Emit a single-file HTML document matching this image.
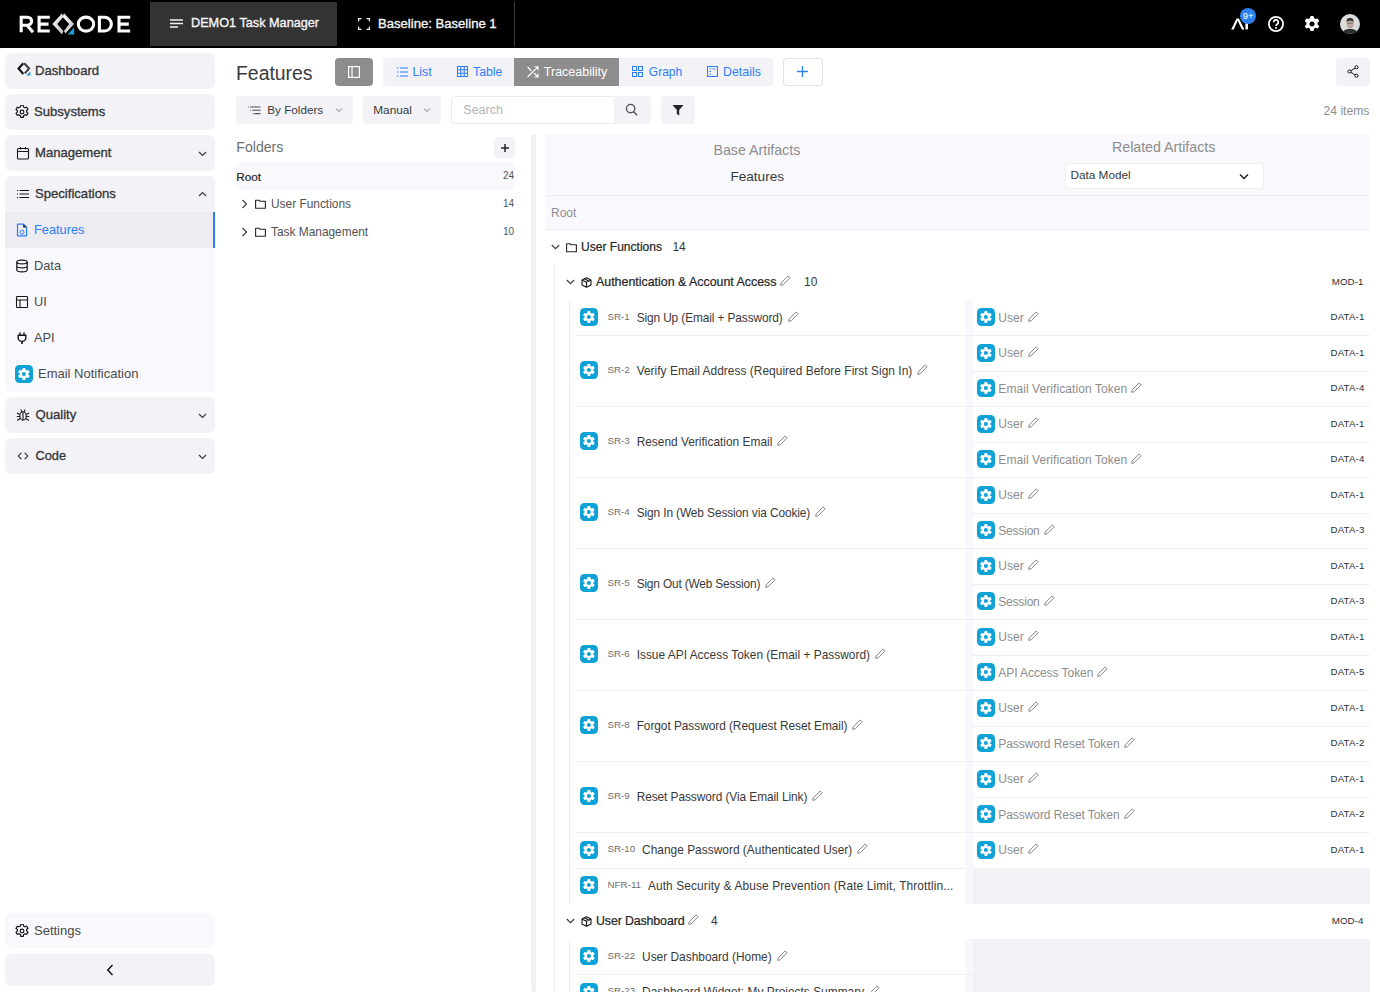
<!DOCTYPE html><html><head><meta charset="utf-8"><style>
*{box-sizing:border-box;margin:0;padding:0}
html,body{width:1380px;height:992px;overflow:hidden;background:#fff;font-family:"Liberation Sans",sans-serif;color:#393939}
.abs{position:absolute}
.txt{position:absolute;white-space:nowrap;line-height:normal}
.card{position:absolute;left:5px;width:210px;background:#f3f3f7;border-radius:6px}
.btn{position:absolute;border-radius:4px;background:#f3f3f7}
.div{position:absolute;height:1px;background:#efeff3}
.gi{position:absolute;width:18px;height:18px}
.pen{position:absolute;width:11px;height:11px}
.frow{position:absolute;display:flex;align-items:center;white-space:nowrap;line-height:normal}
</style></head><body><svg width="0" height="0" style="position:absolute">
<defs>
<symbol id="gear" viewBox="0 0 18 18">
<rect x="0" y="0" width="18" height="18" rx="4.5" fill="#0fa2d7"/>
<g transform="translate(8.9 9)" fill="#fff"><rect x="-1.5" y="-5.9" width="3" height="3" rx="0.6" transform="rotate(0)"/><rect x="-1.5" y="-5.9" width="3" height="3" rx="0.6" transform="rotate(60)"/><rect x="-1.5" y="-5.9" width="3" height="3" rx="0.6" transform="rotate(120)"/><rect x="-1.5" y="-5.9" width="3" height="3" rx="0.6" transform="rotate(180)"/><rect x="-1.5" y="-5.9" width="3" height="3" rx="0.6" transform="rotate(240)"/><rect x="-1.5" y="-5.9" width="3" height="3" rx="0.6" transform="rotate(300)"/><circle r="4.4"/><circle r="2.05" fill="#0fa2d7"/></g>
</symbol>
<symbol id="pen" viewBox="0 0 11 11">
<path d="M8.2,0.9 L10.1,2.8 L3.0,9.9 L0.7,10.3 L1.1,8.0 Z" fill="none" stroke="#7a7a7a" stroke-width="0.9" stroke-linejoin="round"/>
</symbol>
<symbol id="folder" viewBox="0 0 11 10">
<path d="M0.6,1.2 h3.4 l1,1.1 h5.4 v6.9 h-9.8 z" fill="none" stroke="#262626" stroke-width="1.1" stroke-linejoin="round"/>
</symbol>
<symbol id="cube" viewBox="0 0 11 11">
<path d="M5.5,0.7 L10,3 V8 L5.5,10.3 L1,8 V3 Z M1,3 L5.5,5.3 L10,3 M5.5,5.3 V10.3 M3.2,1.85 L7.8,4.1" fill="none" stroke="#161616" stroke-width="1.1" stroke-linejoin="round"/>
</symbol>
</defs>
</svg>
<div class="abs" style="left:0;top:0;width:1380px;height:48px;background:#000"></div>
<svg class="abs" style="left:15px;top:10px" width="120" height="28" viewBox="15 10 120 28">
<defs><linearGradient id="lg1" x1="0" y1="0" x2="1" y2="1"><stop offset="0" stop-color="#ffffff"/><stop offset="1" stop-color="#bdbdbd"/></linearGradient></defs>
<g fill="none" stroke="#fff" stroke-width="3.1">
<path d="M21.2,32.3 V17.2 H27.6 A4,4 0 0 1 27.6,25.2 H21.2 M27,25.2 L33,32.3"/>
<path d="M49.8,17.2 H39.1 V31 H49.8 M39.1,24.1 H48.5"/>
<ellipse cx="86" cy="24.1" rx="7.7" ry="7.0"/>
<path d="M99.4,17.2 V31 H104.5 A6.9,6.9 0 0 0 104.5,17.2 Z"/>
<path d="M130.2,17.2 H119 V31 H130.2 M119,24.1 H128.8"/>
</g>
<path d="M62.0,13.2 L63.4,17.0 L57.2,24.0 L63.4,31.0 L62.0,34.6 L52.4,24.0 Z" fill="url(#lg1)"/>
<path d="M64.0,13.2 L74.1,24.0 L65.4,33.6 L64.0,31.0 L69.2,24.0 L62.6,17.0 Z" fill="url(#lg1)"/>
<path d="M67.6,34.5 L74.1,27.6 V34.5 Z" fill="#1aa0e0"/>
</svg>
<div class="abs" style="left:150px;top:2px;width:187px;height:44px;background:#333"></div>
<svg class="abs" style="left:170px;top:19px" width="14" height="10" viewBox="0 0 14 10"><path d="M0,1 H13 M0,4.5 H13 M0,8 H8" stroke="#f4f4f4" stroke-width="1.3"/></svg>
<div class="txt" style="top:16.00px;font-size:12.7px;color:#f4f4f4;left:191px;-webkit-text-stroke:0.35px #f4f4f4;">DEMO1 Task Manager</div>
<svg class="abs" style="left:358px;top:18px" width="12" height="12" viewBox="0 0 12 12"><path d="M0.6,3.5 V0.6 H3.5 M8.5,0.6 H11.4 V3.5 M11.4,8.5 V11.4 H8.5 M3.5,11.4 H0.6 V8.5" fill="none" stroke="#f4f4f4" stroke-width="1.2"/></svg>
<div class="txt" style="top:15.77px;font-size:13.1px;color:#f4f4f4;left:378px;-webkit-text-stroke:0.35px #f4f4f4;">Baseline: Baseline 1</div>
<div class="abs" style="left:514px;top:2px;width:1px;height:44px;background:#3d3d3d"></div>
<svg class="abs" style="left:1230px;top:16px" width="22" height="16" viewBox="1230 16 22 16"><path d="M1231.2,29.4 L1236.5,18.5 H1238.9 L1244.4,29.4 H1241.9 L1237.7,20.8 L1233.7,29.4 Z" fill="#fff"/><rect x="1245.4" y="20" width="2.6" height="9.4" fill="#fff"/></svg>
<div class="abs" style="left:1240px;top:7.8px;width:16px;height:16px;border-radius:50%;background:#2f80ed"></div>
<div class="txt" style="top:10.14px;font-size:9.5px;color:#fff;left:1242.8px;">9+</div>
<svg class="abs" style="left:1267px;top:15px" width="18" height="18" viewBox="0 0 18 18"><circle cx="9" cy="9" r="7.1" fill="none" stroke="#fff" stroke-width="1.8"/><path d="M6.7,7.2 a2.3,2.3 0 1 1 3.3,2.05 c-0.6,0.3 -0.95,0.75 -0.95,1.5 v0.35" fill="none" stroke="#fff" stroke-width="1.7"/><circle cx="9" cy="13.1" r="1" fill="#fff"/></svg>
<svg class="abs" style="left:1302.7px;top:15px" width="18" height="18" viewBox="0 0 18 18"><g transform="translate(9 9)"><path fill="#fff" fill-rule="evenodd" d="M-1.5,-8 h3 l0.45,2.1 a6,6 0 0 1 1.7,1 l2.05,-0.7 1.5,2.6 -1.6,1.45 a6,6 0 0 1 0,2 l1.6,1.45 -1.5,2.6 -2.050,-0.7 a6,6 0 0 1 -1.7,1 l-0.45,2.1 h-3 l-0.45,-2.1 a6,6 0 0 1 -1.7,-1 l-2.05,0.7 -1.5,-2.6 1.6,-1.45 a6,6 0 0 1 0,-2 l-1.6,-1.45 1.5,-2.6 2.05,0.7 a6,6 0 0 1 1.7,-1 z M0,-2.6 a2.6,2.6 0 1 0 0.001,0 z"/></g></svg>
<svg class="abs" style="left:1340px;top:14px" width="20" height="20" viewBox="0 0 20 20"><defs><clipPath id="av"><circle cx="10" cy="10" r="10"/></clipPath></defs><g clip-path="url(#av)"><rect width="20" height="20" fill="#dcdcdc"/><ellipse cx="10.1" cy="10" rx="3.4" ry="4.4" fill="#b9a79c"/><path d="M6.6,8.2 q-0.2,-4.2 3.5,-4.2 q3.7,0 3.5,4.2 q-0.6,-1.8 -3.5,-1.8 q-2.9,0 -3.5,1.8z" fill="#2e2a28"/><path d="M6.9,9.3 h6.4" stroke="#555" stroke-width="0.6"/><path d="M1.5,20 q1.5,-4.6 8.6,-5.2 q7,0.6 8.4,5.2z" fill="#2b2d2e"/></g></svg>
<div class="card" style="top:53px;height:36px"></div>
<svg class="abs" style="left:16.5px;top:62px" width="14" height="14" viewBox="0 0 14 14"><path d="M6.3,1.2 L1.6,6.6 L6.3,12" fill="none" stroke="#161616" stroke-width="2.2"/><path d="M7.3,1.2 L12,6.6 L7.8,11.4" fill="none" stroke="#444" stroke-width="2.2"/><path d="M9.2,13.6 L13.4,9.6 V13.6Z" fill="#1e9ad6"/></svg>
<div class="txt" style="top:62.97px;font-size:13.1px;color:#393939;left:35px;-webkit-text-stroke:0.35px #393939;">Dashboard</div>
<div class="card" style="top:94px;height:36px"></div>
<svg class="abs" style="left:15px;top:105px" width="14" height="14" viewBox="0.6 0.6 12.8 12.8"><g transform="translate(7 7)"><path fill="none" stroke="#161616" stroke-width="1.1" d="M-1.1,-6.2 h2.2 l0.4,1.6 a4.7,4.7 0 0 1 1.3,0.75 l1.55,-0.55 1.1,1.9 -1.2,1.1 a4.7,4.7 0 0 1 0,1.5 l1.2,1.1 -1.1,1.9 -1.55,-0.55 a4.7,4.7 0 0 1 -1.3,0.75 l-0.4,1.6 h-2.2 l-0.4,-1.6 a4.7,4.7 0 0 1 -1.3,-0.75 l-1.55,0.55 -1.1,-1.9 1.2,-1.1 a4.7,4.7 0 0 1 0,-1.5 l-1.2,-1.1 1.1,-1.9 1.55,0.55 a4.7,4.7 0 0 1 1.3,-0.75 z"/><circle r="1.7" fill="none" stroke="#161616" stroke-width="1.1"/></g></svg>
<div class="txt" style="top:103.97px;font-size:13.1px;color:#393939;left:34px;-webkit-text-stroke:0.35px #393939;">Subsystems</div>
<div class="card" style="top:135px;height:36px"></div>
<svg class="abs" style="left:16px;top:146px" width="14" height="14" viewBox="0 0 14 14"><rect x="1.5" y="2.5" width="11" height="10.5" rx="1" fill="none" stroke="#161616" stroke-width="1.1"/><path d="M1.5,5.5 H12.5 M4.5,1 V3.5 M9.5,1 V3.5" stroke="#161616" stroke-width="1.1"/></svg>
<div class="txt" style="top:144.97px;font-size:13.1px;color:#393939;left:35px;-webkit-text-stroke:0.35px #393939;">Management</div>
<svg class="abs" style="left:198px;top:148.5px" width="9" height="9" viewBox="0 0 9 9"><path d="M1,3 L4.5,6.5 L8,3" fill="none" stroke="#393939" stroke-width="1.2"/></svg>
<div class="card" style="top:176px;height:216px;background:#f9f9fd;overflow:hidden"><div class="abs" style="left:0;top:0;width:210px;height:36px;background:#f3f3f7"></div><div class="abs" style="left:0;top:36px;width:210px;height:36px;background:#ececf2"></div><div class="abs" style="left:208px;top:36px;width:2px;height:36px;background:#2d7ff9"></div></div>
<svg class="abs" style="left:16px;top:187px" width="14" height="14" viewBox="0 0 14 14"><path d="M1,3.5 H2 M1,7 H2 M1,10.5 H2 M3.6,3.5 H13 M3.6,7 H13 M3.6,10.5 H13" stroke="#161616" stroke-width="1.15"/></svg>
<div class="txt" style="top:185.97px;font-size:13.1px;color:#393939;left:35px;-webkit-text-stroke:0.35px #393939;">Specifications</div>
<svg class="abs" style="left:198px;top:189.5px" width="9" height="9" viewBox="0 0 9 9"><path d="M1,6 L4.5,2.5 L8,6" fill="none" stroke="#393939" stroke-width="1.2"/></svg>
<svg class="abs" style="left:15px;top:223px" width="14" height="14" viewBox="0 0 14 14"><path d="M2.5,1.2 H8.6 L11.6,4.2 V12.8 H2.5 Z" fill="none" stroke="#2d7ff9" stroke-width="1.2" stroke-linejoin="round"/><path d="M8.2,1.2 V4.6 H11.6 Z" fill="#1a1a1a"/><circle cx="7" cy="9.2" r="2" fill="none" stroke="#2d7ff9" stroke-width="1"/></svg>
<div class="txt" style="top:222.14px;font-size:12.8px;color:#2d7ff9;left:34px;">Features</div>
<svg class="abs" style="left:15px;top:259px" width="14" height="14" viewBox="0 0 14 14"><ellipse cx="7" cy="3" rx="5.2" ry="1.9" fill="none" stroke="#161616" stroke-width="1.2"/><path d="M1.8,3 V11 A5.2,1.9 0 0 0 12.2,11 V3 M1.8,7 A5.2,1.9 0 0 0 12.2,7" fill="none" stroke="#161616" stroke-width="1.2"/></svg>
<div class="txt" style="top:258.14px;font-size:12.8px;color:#4a4a4a;left:34px;">Data</div>
<svg class="abs" style="left:15px;top:295px" width="14" height="14" viewBox="0 0 14 14"><rect x="1.5" y="1.5" width="11" height="11" rx="0.8" fill="none" stroke="#161616" stroke-width="1.1"/><path d="M1.5,5 H12.5 M5,5 V12.5" stroke="#161616" stroke-width="1.1"/></svg>
<div class="txt" style="top:294.14px;font-size:12.8px;color:#4a4a4a;left:34px;">UI</div>
<svg class="abs" style="left:15px;top:331px" width="14" height="14" viewBox="0 0 14 14"><path d="M5,1.2 V4 M9,1.2 V4" stroke="#161616" stroke-width="1.3"/><path d="M3.2,4.2 H10.8 V6.8 A3.8,3.6 0 0 1 3.2,6.8 Z" fill="none" stroke="#161616" stroke-width="1.4"/><path d="M7,10.4 V13" stroke="#161616" stroke-width="1.6"/></svg>
<div class="txt" style="top:330.14px;font-size:12.8px;color:#4a4a4a;left:34px;">API</div>
<svg class="gi" style="left:15px;top:365px" viewBox="0 0 18 18"><use href="#gear"/></svg>
<div class="txt" style="top:366.02px;font-size:13px;color:#4a4a4a;left:38px;">Email Notification</div>
<div class="card" style="top:397px;height:36px"></div>
<svg class="abs" style="left:16px;top:408px" width="14" height="14" viewBox="0 0 14 14"><ellipse cx="7" cy="8" rx="3.2" ry="4.2" fill="none" stroke="#161616" stroke-width="1.1"/><path d="M7,4 V12 M1,5 L3.8,6.5 M13,5 L10.2,6.5 M0.8,8.5 H3.8 M13.2,8.5 H10.2 M1.2,12.5 L4,10.5 M12.8,12.5 L10,10.5 M4.8,1.5 L5.8,3.9 M9.2,1.5 L8.2,3.9" stroke="#161616" stroke-width="1.1" fill="none"/></svg>
<div class="txt" style="top:406.97px;font-size:13.1px;color:#393939;left:35.5px;-webkit-text-stroke:0.35px #393939;">Quality</div>
<svg class="abs" style="left:198px;top:410.5px" width="9" height="9" viewBox="0 0 9 9"><path d="M1,3 L4.5,6.5 L8,3" fill="none" stroke="#393939" stroke-width="1.2"/></svg>
<div class="card" style="top:438px;height:36px"></div>
<svg class="abs" style="left:15px;top:449px" width="14" height="14" viewBox="0 0 14 14"><path d="M6.3,3.8 L3.3,7 L6.3,10.2 M9.7,3.8 L12.7,7 L9.7,10.2" fill="none" stroke="#161616" stroke-width="1.05"/></svg>
<div class="txt" style="top:448.14px;font-size:12.8px;color:#393939;left:35.5px;-webkit-text-stroke:0.35px #393939;">Code</div>
<svg class="abs" style="left:198px;top:451.5px" width="9" height="9" viewBox="0 0 9 9"><path d="M1,3 L4.5,6.5 L8,3" fill="none" stroke="#393939" stroke-width="1.2"/></svg>
<div class="card" style="top:913px;height:35px;background:#f9f9fd"></div>
<svg class="abs" style="left:15px;top:924px" width="14" height="14" viewBox="0.6 0.6 12.8 12.8"><g transform="translate(7 7)"><path fill="none" stroke="#161616" stroke-width="1.1" d="M-1.1,-6.2 h2.2 l0.4,1.6 a4.7,4.7 0 0 1 1.3,0.75 l1.55,-0.55 1.1,1.9 -1.2,1.1 a4.7,4.7 0 0 1 0,1.5 l1.2,1.1 -1.1,1.9 -1.55,-0.55 a4.7,4.7 0 0 1 -1.3,0.75 l-0.4,1.6 h-2.2 l-0.4,-1.6 a4.7,4.7 0 0 1 -1.3,-0.75 l-1.55,0.55 -1.1,-1.9 1.2,-1.1 a4.7,4.7 0 0 1 0,-1.5 l-1.2,-1.1 1.1,-1.9 1.55,0.55 a4.7,4.7 0 0 1 1.3,-0.75 z"/><circle r="1.7" fill="none" stroke="#161616" stroke-width="1.1"/></g></svg>
<div class="txt" style="top:923.02px;font-size:13px;color:#4a4a4a;left:34px;">Settings</div>
<div class="card" style="top:954px;height:32px"></div>
<svg class="abs" style="left:106px;top:964px" width="8" height="12" viewBox="0 0 8 12"><path d="M6.5,1 L1.8,6 L6.5,11" fill="none" stroke="#161616" stroke-width="1.5"/></svg>
<div class="txt" style="top:61.84px;font-size:19.4px;color:#3a3a3a;left:236px;">Features</div>
<div class="btn" style="left:335px;top:58px;width:38px;height:28px;background:#8d8d8d"></div>
<svg class="abs" style="left:348px;top:66px" width="12" height="12" viewBox="0 0 12 12"><rect x="0.6" y="0.6" width="10.8" height="10.8" fill="none" stroke="#fff" stroke-width="1.2"/><path d="M4,0.6 V11.4" stroke="#fff" stroke-width="1.2"/></svg>
<div class="btn" style="left:383px;top:58px;width:390px;height:28px"></div>
<div class="abs" style="left:514px;top:58px;width:105px;height:28px;background:#8d8d8d"></div>
<svg class="abs" style="left:397px;top:67px" width="11" height="10" viewBox="0 0 11 10"><path d="M0,1 H1.5 M0,5 H1.5 M0,9 H1.5 M3,1 H11 M3,5 H11 M3,9 H11" stroke="#2d7ff9" stroke-width="1.1"/></svg>
<div class="txt" style="top:64.93px;font-size:12.3px;color:#2d7ff9;left:412.5px;">List</div>
<svg class="abs" style="left:457px;top:66px" width="11" height="11" viewBox="0 0 11 11"><path d="M0.5,0.5 H10.5 V10.5 H0.5 Z M0.5,3.8 H10.5 M0.5,7.2 H10.5 M3.8,0.5 V10.5 M7.2,0.5 V10.5" fill="none" stroke="#2d7ff9" stroke-width="1.1"/></svg>
<div class="txt" style="top:64.93px;font-size:12.3px;color:#2d7ff9;left:473px;">Table</div>
<svg class="abs" style="left:527px;top:66px" width="12" height="12" viewBox="0 0 12 12"><path d="M0.5,1 L4.5,5 M0.5,11 L11,0.8 M7.5,0.8 H11 V4.3 M7,7 L11,11 M7.5,11 H11 V7.5" fill="none" stroke="#fff" stroke-width="1.1"/></svg>
<div class="txt" style="top:64.81px;font-size:12.5px;color:#fff;left:543.8px;">Traceability</div>
<svg class="abs" style="left:632px;top:66px" width="11" height="11" viewBox="0 0 11 11"><path d="M0.5,0.5 H4.5 V4.5 H0.5 Z M6.5,0.5 H10.5 V4.5 H6.5 Z M0.5,6.5 H4.5 V10.5 H0.5 Z M6.5,6.5 H10.5 V10.5 H6.5 Z" fill="none" stroke="#2d7ff9" stroke-width="1.1"/></svg>
<div class="txt" style="top:65.10px;font-size:12px;color:#2d7ff9;left:648.8px;">Graph</div>
<svg class="abs" style="left:707px;top:66px" width="11" height="11" viewBox="0 0 11 11"><path d="M0.5,0.5 H10.5 V10.5 H0.5 Z M2.5,3 H4 M2.5,5.5 H4 M2.5,8 H4 M5.5,3 H8.5" fill="none" stroke="#2d7ff9" stroke-width="1.1"/></svg>
<div class="txt" style="top:64.87px;font-size:12.4px;color:#2d7ff9;left:723px;">Details</div>
<div class="btn" style="left:783px;top:58px;width:40px;height:28px;background:#fff;border:1px solid #e0e0e6"></div>
<svg class="abs" style="left:797px;top:66px" width="11" height="11" viewBox="0 0 11 11"><path d="M5.5,0 V11 M0,5.5 H11" stroke="#2d7ff9" stroke-width="1.3"/></svg>
<div class="btn" style="left:1336px;top:58px;width:34px;height:28px"></div>
<svg class="abs" style="left:1347px;top:65px" width="12" height="13" viewBox="0 0 12 13"><circle cx="2.5" cy="6.5" r="1.6" fill="none" stroke="#161616" stroke-width="1"/><circle cx="9.5" cy="2.3" r="1.6" fill="none" stroke="#161616" stroke-width="1"/><circle cx="9.5" cy="10.7" r="1.6" fill="none" stroke="#161616" stroke-width="1"/><path d="M3.9,5.7 L8.1,3.1 M3.9,7.3 L8.1,9.9" stroke="#161616" stroke-width="1"/></svg>
<div class="btn" style="left:236px;top:96px;width:117px;height:28px"></div>
<svg class="abs" style="left:247.5px;top:106px" width="13" height="9" viewBox="0 0 13 9"><path d="M0,1 H0.8 M2.2,1 H12.5 M2.2,4.3 H3 M4.2,4.3 H12.5 M4.6,7.6 H5.4 M6.4,7.6 H12.5" stroke="#505050" stroke-width="1.05"/></svg>
<div class="txt" style="top:103.27px;font-size:11.7px;color:#393939;left:267.3px;">By Folders</div>
<svg class="abs" style="left:335px;top:107px" width="8" height="6" viewBox="0 0 8 6"><path d="M1,1.5 L4,4.5 L7,1.5" fill="none" stroke="#777" stroke-width="1"/></svg>
<div class="btn" style="left:363px;top:96px;width:78px;height:28px"></div>
<div class="txt" style="top:103.22px;font-size:11.8px;color:#393939;left:373.3px;">Manual</div>
<svg class="abs" style="left:423px;top:107px" width="8" height="6" viewBox="0 0 8 6"><path d="M1,1.5 L4,4.5 L7,1.5" fill="none" stroke="#777" stroke-width="1"/></svg>
<div class="btn" style="left:451px;top:96px;width:200px;height:28px;background:#fff;border:1px solid #ececf0"></div>
<div class="abs" style="left:614px;top:96px;width:37px;height:28px;background:#f3f3f7;border-radius:0 4px 4px 0"></div>
<div class="txt" style="top:102.81px;font-size:12.5px;color:#b4b4b8;left:463.3px;">Search</div>
<svg class="abs" style="left:625px;top:103px" width="13" height="13" viewBox="0 0 13 13"><circle cx="5.6" cy="5.6" r="4.2" fill="none" stroke="#505050" stroke-width="1.35"/><path d="M8.7,8.7 L12.2,12.2" stroke="#505050" stroke-width="1.4"/></svg>
<div class="btn" style="left:661px;top:96px;width:34px;height:28px"></div>
<svg class="abs" style="left:672px;top:104px" width="12" height="12" viewBox="0 0 12 12"><path d="M0.5,1 H11.5 L7.2,6 V11.5 L4.8,10 V6 Z" fill="#262626"/></svg>
<div class="txt" style="top:103.51px;font-size:12.15px;color:#8d8d8d;left:1323.5px;">24 items</div>
<div class="txt" style="top:138.89px;font-size:14.1px;color:#6f6f6f;left:236.3px;">Folders</div>
<div class="btn" style="left:494px;top:137px;width:21px;height:21px"></div>
<svg class="abs" style="left:501px;top:144px" width="8" height="8" viewBox="0 0 8 8"><path d="M4,0 V8 M0,4 H8" stroke="#262626" stroke-width="1.5"/></svg>
<div class="abs" style="left:236px;top:162px;width:279px;height:28px;background:#f9f9fd;border-radius:4px"></div>
<div class="txt" style="top:169.77px;font-size:11.7px;color:#262626;left:236.3px;-webkit-text-stroke:0.2px #262626;">Root</div>
<div class="txt" style="top:169.75px;font-size:10px;color:#555;right:866px;">24</div>
<svg class="abs" style="left:241px;top:198.5px" width="7" height="10" viewBox="0 0 7 10"><path d="M1.5,1 L5.5,5 L1.5,9" fill="none" stroke="#393939" stroke-width="1.1"/></svg>
<svg class="abs" style="left:255px;top:198.5px" width="11" height="10" viewBox="0 0 11 10"><use href="#folder"/></svg>
<div class="txt" style="top:196.66px;font-size:11.9px;color:#525252;left:271px;">User Functions</div>
<div class="txt" style="top:197.75px;font-size:10px;color:#555;right:866px;">14</div>
<svg class="abs" style="left:241px;top:226.5px" width="7" height="10" viewBox="0 0 7 10"><path d="M1.5,1 L5.5,5 L1.5,9" fill="none" stroke="#393939" stroke-width="1.1"/></svg>
<svg class="abs" style="left:255px;top:226.5px" width="11" height="10" viewBox="0 0 11 10"><use href="#folder"/></svg>
<div class="txt" style="top:224.66px;font-size:11.9px;color:#525252;left:271px;">Task Management</div>
<div class="txt" style="top:225.75px;font-size:10px;color:#555;right:866px;">10</div>
<div class="abs" style="left:531px;top:134px;width:5px;height:858px;background:#f0f0f5;border-radius:2.5px"></div>
<div class="abs" style="left:546px;top:134px;width:824px;height:61px;background:#f9f9fd"></div>
<div class="abs" style="left:546px;top:195px;width:824px;height:1px;background:#ececf1"></div>
<div class="abs" style="left:546px;top:196px;width:824px;height:33px;background:#f9f9fd"></div>
<div class="abs" style="left:546px;top:229px;width:824px;height:1px;background:#ececf1"></div>
<div class="txt" style="top:141.84px;font-size:14.2px;color:#8d8d8d;left:713.5px;">Base Artifacts</div>
<div class="txt" style="top:169.38px;font-size:13.6px;color:#393939;left:730.4px;">Features</div>
<div class="txt" style="top:138.84px;font-size:14.2px;color:#8d8d8d;left:1112px;">Related Artifacts</div>
<div class="abs" style="left:1065px;top:162.5px;width:198.5px;height:26.5px;background:#fff;border:1px solid #efeff3;border-radius:4px"></div>
<div class="txt" style="top:167.81px;font-size:11.8px;color:#393939;left:1070.4px;">Data Model</div>
<svg class="abs" style="left:1239px;top:172.5px" width="10" height="7" viewBox="0 0 10 7"><path d="M1,1.5 L5,5.5 L9,1.5" fill="none" stroke="#161616" stroke-width="1.3"/></svg>
<div class="txt" style="top:205.60px;font-size:12px;color:#8d8d8d;left:551px;">Root</div>
<div class="abs" style="left:554px;top:265px;width:1px;height:727px;background:#ececf1"></div>
<div class="abs" style="left:569px;top:300px;width:1px;height:603.5px;background:#ececf1"></div>
<div class="abs" style="left:569px;top:939px;width:1px;height:60px;background:#ececf1"></div>
<svg class="abs" style="left:551px;top:243.25px" width="9" height="8" viewBox="0 0 9 8"><path d="M0.8,2 L4.5,5.7 L8.2,2" fill="none" stroke="#393939" stroke-width="1.1"/></svg>
<svg class="abs" style="left:566px;top:241.75px" width="11" height="11" viewBox="0 0 11 11"><use href="#folder"/></svg>
<div class="frow" style="left:581px;top:237.25px;height:20px"><span style="font-size:12.05px;-webkit-text-stroke:0.22px #262626;color:#262626;letter-spacing:0px">User Functions</span><span style="width:10.4px"></span><span style="font-size:12px;color:#393939">14</span></div>
<svg class="abs" style="left:566px;top:278.25px" width="9" height="8" viewBox="0 0 9 8"><path d="M0.8,2 L4.5,5.7 L8.2,2" fill="none" stroke="#393939" stroke-width="1.1"/></svg>
<svg class="abs" style="left:581px;top:276.75px" width="11" height="11" viewBox="0 0 11 11"><use href="#cube"/></svg>
<div class="frow" style="left:596px;top:272.25px;height:20px"><span style="font-size:12.4px;-webkit-text-stroke:0.22px #262626;color:#262626;letter-spacing:0px">Authentication &amp; Account Access</span><span style="width:4px"></span><svg width="11" height="11" viewBox="0 0 11 11" style="flex:none;position:relative;top:-1.5px"><use href="#pen"/></svg><span style="width:12.5px"></span><span style="font-size:12px;color:#393939">10</span></div>
<div class="txt" style="top:275.87px;font-size:9.7px;color:#2e2e2e;right:16.5px;letter-spacing:0.1px;">MOD-1</div>
<svg class="gi" style="left:580px;top:308.15px" viewBox="0 0 18 18"><use href="#gear"/></svg>
<div class="frow" style="left:607.5px;top:307.75px;height:20px"><span style="font-size:9.8px;color:#6f6f6f;position:relative;top:-1.5px">SR-1</span><span style="width:6.8px"></span><span style="font-size:11.9px;color:#393939;letter-spacing:-0.11507692307692306px">Sign Up (Email + Password)</span><span style="width:5px"></span><svg width="11" height="11" viewBox="0 0 11 11" style="flex:none;position:relative;top:-1.5px"><use href="#pen"/></svg></div>
<div class="abs" style="left:965px;top:300px;width:8px;height:35.5px;background:#f8f8fc"></div>
<svg class="gi" style="left:977px;top:308.15px" viewBox="0 0 18 18"><use href="#gear"/></svg>
<div class="frow" style="left:998.3px;top:307.75px;height:20px"><span style="font-size:12px;color:#8d8d8d;letter-spacing:0px">User</span><span style="width:4px"></span><svg width="11" height="11" viewBox="0 0 11 11" style="flex:none;position:relative;top:-1.5px"><use href="#pen"/></svg></div>
<div class="txt" style="top:311.17px;font-size:9.7px;color:#2e2e2e;right:15.5px;letter-spacing:0.15px;">DATA-1</div>
<div class="div" style="left:576px;top:335.0px;width:794px"></div>
<svg class="gi" style="left:580px;top:361.4px" viewBox="0 0 18 18"><use href="#gear"/></svg>
<div class="frow" style="left:607.5px;top:361.0px;height:20px"><span style="font-size:9.8px;color:#6f6f6f;position:relative;top:-1.5px">SR-2</span><span style="width:6.8px"></span><span style="font-size:11.9px;color:#393939;letter-spacing:0.04046153846153846px">Verify Email Address (Required Before First Sign In)</span><span style="width:5px"></span><svg width="11" height="11" viewBox="0 0 11 11" style="flex:none;position:relative;top:-1.5px"><use href="#pen"/></svg></div>
<div class="abs" style="left:965px;top:335.5px;width:8px;height:71.0px;background:#f8f8fc"></div>
<svg class="gi" style="left:977px;top:343.65px" viewBox="0 0 18 18"><use href="#gear"/></svg>
<div class="frow" style="left:998.3px;top:343.25px;height:20px"><span style="font-size:12px;color:#8d8d8d;letter-spacing:0px">User</span><span style="width:4px"></span><svg width="11" height="11" viewBox="0 0 11 11" style="flex:none;position:relative;top:-1.5px"><use href="#pen"/></svg></div>
<div class="txt" style="top:346.67px;font-size:9.7px;color:#2e2e2e;right:15.5px;letter-spacing:0.15px;">DATA-1</div>
<div class="div" style="left:973px;top:370.5px;width:397px"></div>
<svg class="gi" style="left:977px;top:379.15px" viewBox="0 0 18 18"><use href="#gear"/></svg>
<div class="frow" style="left:998.3px;top:378.75px;height:20px"><span style="font-size:12px;color:#8d8d8d;letter-spacing:0.075px">Email Verification Token</span><span style="width:4px"></span><svg width="11" height="11" viewBox="0 0 11 11" style="flex:none;position:relative;top:-1.5px"><use href="#pen"/></svg></div>
<div class="txt" style="top:382.17px;font-size:9.7px;color:#2e2e2e;right:15.5px;letter-spacing:0.15px;">DATA-4</div>
<div class="div" style="left:576px;top:406.0px;width:794px"></div>
<svg class="gi" style="left:580px;top:432.4px" viewBox="0 0 18 18"><use href="#gear"/></svg>
<div class="frow" style="left:607.5px;top:432.0px;height:20px"><span style="font-size:9.8px;color:#6f6f6f;position:relative;top:-1.5px">SR-3</span><span style="width:6.8px"></span><span style="font-size:11.9px;color:#393939;letter-spacing:0.007999999999999997px">Resend Verification Email</span><span style="width:5px"></span><svg width="11" height="11" viewBox="0 0 11 11" style="flex:none;position:relative;top:-1.5px"><use href="#pen"/></svg></div>
<div class="abs" style="left:965px;top:406.5px;width:8px;height:71.0px;background:#f8f8fc"></div>
<svg class="gi" style="left:977px;top:414.65px" viewBox="0 0 18 18"><use href="#gear"/></svg>
<div class="frow" style="left:998.3px;top:414.25px;height:20px"><span style="font-size:12px;color:#8d8d8d;letter-spacing:0px">User</span><span style="width:4px"></span><svg width="11" height="11" viewBox="0 0 11 11" style="flex:none;position:relative;top:-1.5px"><use href="#pen"/></svg></div>
<div class="txt" style="top:417.67px;font-size:9.7px;color:#2e2e2e;right:15.5px;letter-spacing:0.15px;">DATA-1</div>
<div class="div" style="left:973px;top:441.5px;width:397px"></div>
<svg class="gi" style="left:977px;top:450.15px" viewBox="0 0 18 18"><use href="#gear"/></svg>
<div class="frow" style="left:998.3px;top:449.75px;height:20px"><span style="font-size:12px;color:#8d8d8d;letter-spacing:0.075px">Email Verification Token</span><span style="width:4px"></span><svg width="11" height="11" viewBox="0 0 11 11" style="flex:none;position:relative;top:-1.5px"><use href="#pen"/></svg></div>
<div class="txt" style="top:453.17px;font-size:9.7px;color:#2e2e2e;right:15.5px;letter-spacing:0.15px;">DATA-4</div>
<div class="div" style="left:576px;top:477.0px;width:794px"></div>
<svg class="gi" style="left:580px;top:503.4px" viewBox="0 0 18 18"><use href="#gear"/></svg>
<div class="frow" style="left:607.5px;top:503.0px;height:20px"><span style="font-size:9.8px;color:#6f6f6f;position:relative;top:-1.5px">SR-4</span><span style="width:6.8px"></span><span style="font-size:11.9px;color:#393939;letter-spacing:-0.106125px">Sign In (Web Session via Cookie)</span><span style="width:5px"></span><svg width="11" height="11" viewBox="0 0 11 11" style="flex:none;position:relative;top:-1.5px"><use href="#pen"/></svg></div>
<div class="abs" style="left:965px;top:477.5px;width:8px;height:71.0px;background:#f8f8fc"></div>
<svg class="gi" style="left:977px;top:485.65px" viewBox="0 0 18 18"><use href="#gear"/></svg>
<div class="frow" style="left:998.3px;top:485.25px;height:20px"><span style="font-size:12px;color:#8d8d8d;letter-spacing:0px">User</span><span style="width:4px"></span><svg width="11" height="11" viewBox="0 0 11 11" style="flex:none;position:relative;top:-1.5px"><use href="#pen"/></svg></div>
<div class="txt" style="top:488.67px;font-size:9.7px;color:#2e2e2e;right:15.5px;letter-spacing:0.15px;">DATA-1</div>
<div class="div" style="left:973px;top:512.5px;width:397px"></div>
<svg class="gi" style="left:977px;top:521.15px" viewBox="0 0 18 18"><use href="#gear"/></svg>
<div class="frow" style="left:998.3px;top:520.75px;height:20px"><span style="font-size:12px;color:#8d8d8d;letter-spacing:-0.2px">Session</span><span style="width:4px"></span><svg width="11" height="11" viewBox="0 0 11 11" style="flex:none;position:relative;top:-1.5px"><use href="#pen"/></svg></div>
<div class="txt" style="top:524.17px;font-size:9.7px;color:#2e2e2e;right:15.5px;letter-spacing:0.15px;">DATA-3</div>
<div class="div" style="left:576px;top:548.0px;width:794px"></div>
<svg class="gi" style="left:580px;top:574.4px" viewBox="0 0 18 18"><use href="#gear"/></svg>
<div class="frow" style="left:607.5px;top:574.0px;height:20px"><span style="font-size:9.8px;color:#6f6f6f;position:relative;top:-1.5px">SR-5</span><span style="width:6.8px"></span><span style="font-size:11.9px;color:#393939;letter-spacing:-0.1681818181818182px">Sign Out (Web Session)</span><span style="width:5px"></span><svg width="11" height="11" viewBox="0 0 11 11" style="flex:none;position:relative;top:-1.5px"><use href="#pen"/></svg></div>
<div class="abs" style="left:965px;top:548.5px;width:8px;height:71.0px;background:#f8f8fc"></div>
<svg class="gi" style="left:977px;top:556.65px" viewBox="0 0 18 18"><use href="#gear"/></svg>
<div class="frow" style="left:998.3px;top:556.25px;height:20px"><span style="font-size:12px;color:#8d8d8d;letter-spacing:0px">User</span><span style="width:4px"></span><svg width="11" height="11" viewBox="0 0 11 11" style="flex:none;position:relative;top:-1.5px"><use href="#pen"/></svg></div>
<div class="txt" style="top:559.67px;font-size:9.7px;color:#2e2e2e;right:15.5px;letter-spacing:0.15px;">DATA-1</div>
<div class="div" style="left:973px;top:583.5px;width:397px"></div>
<svg class="gi" style="left:977px;top:592.15px" viewBox="0 0 18 18"><use href="#gear"/></svg>
<div class="frow" style="left:998.3px;top:591.75px;height:20px"><span style="font-size:12px;color:#8d8d8d;letter-spacing:-0.2px">Session</span><span style="width:4px"></span><svg width="11" height="11" viewBox="0 0 11 11" style="flex:none;position:relative;top:-1.5px"><use href="#pen"/></svg></div>
<div class="txt" style="top:595.17px;font-size:9.7px;color:#2e2e2e;right:15.5px;letter-spacing:0.15px;">DATA-3</div>
<div class="div" style="left:576px;top:619.0px;width:794px"></div>
<svg class="gi" style="left:580px;top:645.4px" viewBox="0 0 18 18"><use href="#gear"/></svg>
<div class="frow" style="left:607.5px;top:645.0px;height:20px"><span style="font-size:9.8px;color:#6f6f6f;position:relative;top:-1.5px">SR-6</span><span style="width:6.8px"></span><span style="font-size:11.9px;color:#393939;letter-spacing:0.017073170731707315px">Issue API Access Token (Email + Password)</span><span style="width:5px"></span><svg width="11" height="11" viewBox="0 0 11 11" style="flex:none;position:relative;top:-1.5px"><use href="#pen"/></svg></div>
<div class="abs" style="left:965px;top:619.5px;width:8px;height:71.0px;background:#f8f8fc"></div>
<svg class="gi" style="left:977px;top:627.65px" viewBox="0 0 18 18"><use href="#gear"/></svg>
<div class="frow" style="left:998.3px;top:627.25px;height:20px"><span style="font-size:12px;color:#8d8d8d;letter-spacing:0px">User</span><span style="width:4px"></span><svg width="11" height="11" viewBox="0 0 11 11" style="flex:none;position:relative;top:-1.5px"><use href="#pen"/></svg></div>
<div class="txt" style="top:630.67px;font-size:9.7px;color:#2e2e2e;right:15.5px;letter-spacing:0.15px;">DATA-1</div>
<div class="div" style="left:973px;top:654.5px;width:397px"></div>
<svg class="gi" style="left:977px;top:663.15px" viewBox="0 0 18 18"><use href="#gear"/></svg>
<div class="frow" style="left:998.3px;top:662.75px;height:20px"><span style="font-size:12px;color:#8d8d8d;letter-spacing:-0.05px">API Access Token</span><span style="width:4px"></span><svg width="11" height="11" viewBox="0 0 11 11" style="flex:none;position:relative;top:-1.5px"><use href="#pen"/></svg></div>
<div class="txt" style="top:666.17px;font-size:9.7px;color:#2e2e2e;right:15.5px;letter-spacing:0.15px;">DATA-5</div>
<div class="div" style="left:576px;top:690.0px;width:794px"></div>
<svg class="gi" style="left:580px;top:716.4px" viewBox="0 0 18 18"><use href="#gear"/></svg>
<div class="frow" style="left:607.5px;top:716.0px;height:20px"><span style="font-size:9.8px;color:#6f6f6f;position:relative;top:-1.5px">SR-8</span><span style="width:6.8px"></span><span style="font-size:11.9px;color:#393939;letter-spacing:-0.054081081081081075px">Forgot Password (Request Reset Email)</span><span style="width:5px"></span><svg width="11" height="11" viewBox="0 0 11 11" style="flex:none;position:relative;top:-1.5px"><use href="#pen"/></svg></div>
<div class="abs" style="left:965px;top:690.5px;width:8px;height:71.0px;background:#f8f8fc"></div>
<svg class="gi" style="left:977px;top:698.65px" viewBox="0 0 18 18"><use href="#gear"/></svg>
<div class="frow" style="left:998.3px;top:698.25px;height:20px"><span style="font-size:12px;color:#8d8d8d;letter-spacing:0px">User</span><span style="width:4px"></span><svg width="11" height="11" viewBox="0 0 11 11" style="flex:none;position:relative;top:-1.5px"><use href="#pen"/></svg></div>
<div class="txt" style="top:701.67px;font-size:9.7px;color:#2e2e2e;right:15.5px;letter-spacing:0.15px;">DATA-1</div>
<div class="div" style="left:973px;top:725.5px;width:397px"></div>
<svg class="gi" style="left:977px;top:734.15px" viewBox="0 0 18 18"><use href="#gear"/></svg>
<div class="frow" style="left:998.3px;top:733.75px;height:20px"><span style="font-size:12px;color:#8d8d8d;letter-spacing:-0.065px">Password Reset Token</span><span style="width:4px"></span><svg width="11" height="11" viewBox="0 0 11 11" style="flex:none;position:relative;top:-1.5px"><use href="#pen"/></svg></div>
<div class="txt" style="top:737.17px;font-size:9.7px;color:#2e2e2e;right:15.5px;letter-spacing:0.15px;">DATA-2</div>
<div class="div" style="left:576px;top:761.0px;width:794px"></div>
<svg class="gi" style="left:580px;top:787.4px" viewBox="0 0 18 18"><use href="#gear"/></svg>
<div class="frow" style="left:607.5px;top:787.0px;height:20px"><span style="font-size:9.8px;color:#6f6f6f;position:relative;top:-1.5px">SR-9</span><span style="width:6.8px"></span><span style="font-size:11.9px;color:#393939;letter-spacing:-0.07141935483870968px">Reset Password (Via Email Link)</span><span style="width:5px"></span><svg width="11" height="11" viewBox="0 0 11 11" style="flex:none;position:relative;top:-1.5px"><use href="#pen"/></svg></div>
<div class="abs" style="left:965px;top:761.5px;width:8px;height:71.0px;background:#f8f8fc"></div>
<svg class="gi" style="left:977px;top:769.65px" viewBox="0 0 18 18"><use href="#gear"/></svg>
<div class="frow" style="left:998.3px;top:769.25px;height:20px"><span style="font-size:12px;color:#8d8d8d;letter-spacing:0px">User</span><span style="width:4px"></span><svg width="11" height="11" viewBox="0 0 11 11" style="flex:none;position:relative;top:-1.5px"><use href="#pen"/></svg></div>
<div class="txt" style="top:772.67px;font-size:9.7px;color:#2e2e2e;right:15.5px;letter-spacing:0.15px;">DATA-1</div>
<div class="div" style="left:973px;top:796.5px;width:397px"></div>
<svg class="gi" style="left:977px;top:805.15px" viewBox="0 0 18 18"><use href="#gear"/></svg>
<div class="frow" style="left:998.3px;top:804.75px;height:20px"><span style="font-size:12px;color:#8d8d8d;letter-spacing:-0.065px">Password Reset Token</span><span style="width:4px"></span><svg width="11" height="11" viewBox="0 0 11 11" style="flex:none;position:relative;top:-1.5px"><use href="#pen"/></svg></div>
<div class="txt" style="top:808.17px;font-size:9.7px;color:#2e2e2e;right:15.5px;letter-spacing:0.15px;">DATA-2</div>
<div class="div" style="left:576px;top:832.0px;width:794px"></div>
<svg class="gi" style="left:580px;top:840.65px" viewBox="0 0 18 18"><use href="#gear"/></svg>
<div class="frow" style="left:607.5px;top:840.25px;height:20px"><span style="font-size:9.8px;color:#6f6f6f;position:relative;top:-1.5px">SR-10</span><span style="width:6.8px"></span><span style="font-size:11.9px;color:#393939;letter-spacing:0.019444444444444445px">Change Password (Authenticated User)</span><span style="width:5px"></span><svg width="11" height="11" viewBox="0 0 11 11" style="flex:none;position:relative;top:-1.5px"><use href="#pen"/></svg></div>
<div class="abs" style="left:965px;top:832.5px;width:8px;height:35.5px;background:#f8f8fc"></div>
<svg class="gi" style="left:977px;top:840.65px" viewBox="0 0 18 18"><use href="#gear"/></svg>
<div class="frow" style="left:998.3px;top:840.25px;height:20px"><span style="font-size:12px;color:#8d8d8d;letter-spacing:0px">User</span><span style="width:4px"></span><svg width="11" height="11" viewBox="0 0 11 11" style="flex:none;position:relative;top:-1.5px"><use href="#pen"/></svg></div>
<div class="txt" style="top:843.67px;font-size:9.7px;color:#2e2e2e;right:15.5px;letter-spacing:0.15px;">DATA-1</div>
<div class="div" style="left:576px;top:867.5px;width:794px"></div>
<svg class="gi" style="left:580px;top:876.15px" viewBox="0 0 18 18"><use href="#gear"/></svg>
<div class="frow" style="left:607.5px;top:875.75px;height:20px"><span style="font-size:9.8px;color:#6f6f6f;position:relative;top:-1.5px">NFR-11</span><span style="width:6.8px"></span><span style="font-size:11.9px;color:#393939;letter-spacing:0.12206896551724138px">Auth Security &amp; Abuse Prevention (Rate Limit, Throttlin...</span></div>
<div class="abs" style="left:965px;top:868.0px;width:8px;height:35.5px;background:#f8f8fc"></div>
<div class="abs" style="left:973px;top:868.0px;width:397px;height:35.5px;background:#f2f2f6"></div>
<svg class="abs" style="left:566px;top:917.25px" width="9" height="8" viewBox="0 0 9 8"><path d="M0.8,2 L4.5,5.7 L8.2,2" fill="none" stroke="#393939" stroke-width="1.1"/></svg>
<svg class="abs" style="left:581px;top:915.75px" width="11" height="11" viewBox="0 0 11 11"><use href="#cube"/></svg>
<div class="frow" style="left:596px;top:911.25px;height:20px"><span style="font-size:12.4px;-webkit-text-stroke:0.22px #262626;color:#262626;letter-spacing:-0.13px">User Dashboard</span><span style="width:4px"></span><svg width="11" height="11" viewBox="0 0 11 11" style="flex:none;position:relative;top:-1.5px"><use href="#pen"/></svg><span style="width:11.5px"></span><span style="font-size:12px;color:#393939">4</span></div>
<div class="txt" style="top:914.87px;font-size:9.7px;color:#2e2e2e;right:16.5px;letter-spacing:0.1px;">MOD-4</div>
<svg class="gi" style="left:580px;top:947.15px" viewBox="0 0 18 18"><use href="#gear"/></svg>
<div class="frow" style="left:607.5px;top:946.75px;height:20px"><span style="font-size:9.8px;color:#6f6f6f;position:relative;top:-1.5px">SR-22</span><span style="width:6.8px"></span><span style="font-size:11.9px;color:#393939;letter-spacing:0.003333333333333334px">User Dashboard (Home)</span><span style="width:5px"></span><svg width="11" height="11" viewBox="0 0 11 11" style="flex:none;position:relative;top:-1.5px"><use href="#pen"/></svg></div>
<div class="abs" style="left:965px;top:939.0px;width:8px;height:35.5px;background:#f8f8fc"></div>
<div class="abs" style="left:973px;top:939.0px;width:397px;height:35.5px;background:#f2f2f6"></div>
<div class="div" style="left:576px;top:974.0px;width:794px"></div>
<svg class="gi" style="left:580px;top:982.65px" viewBox="0 0 18 18"><use href="#gear"/></svg>
<div class="frow" style="left:607.5px;top:982.25px;height:20px"><span style="font-size:9.8px;color:#6f6f6f;position:relative;top:-1.5px">SR-23</span><span style="width:6.8px"></span><span style="font-size:11.9px;color:#393939;letter-spacing:0.018918918918918916px">Dashboard Widget: My Projects Summary</span><span style="width:5px"></span><svg width="11" height="11" viewBox="0 0 11 11" style="flex:none;position:relative;top:-1.5px"><use href="#pen"/></svg></div>
<div class="abs" style="left:965px;top:974.5px;width:8px;height:35.5px;background:#f8f8fc"></div>
<div class="abs" style="left:973px;top:974.5px;width:397px;height:35.5px;background:#f2f2f6"></div>
<div class="div" style="left:576px;top:1009.5px;width:794px"></div></body></html>
